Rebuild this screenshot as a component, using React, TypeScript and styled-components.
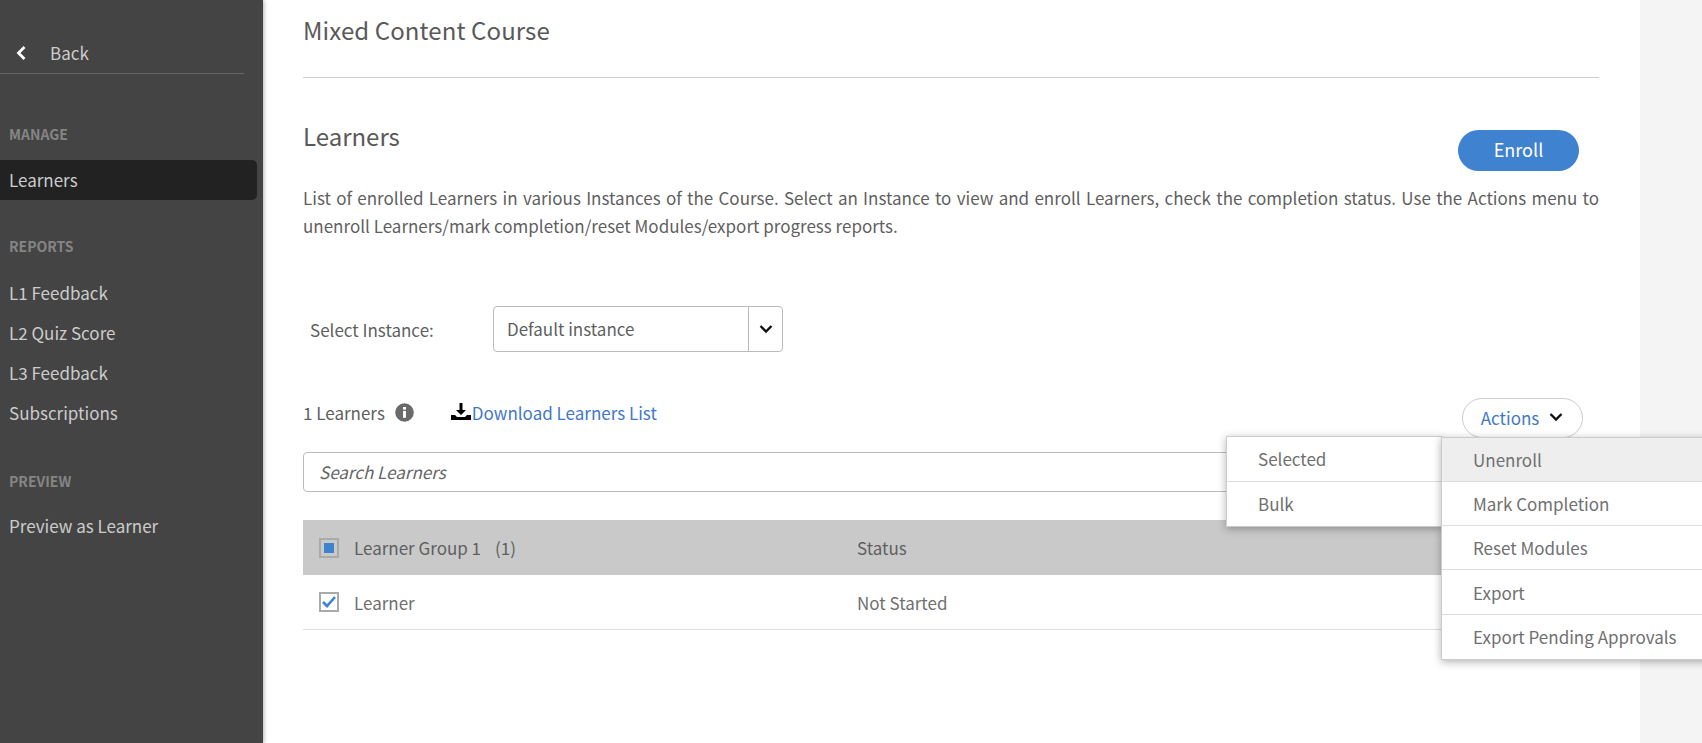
import React from "react";
import styled, { createGlobalStyle } from "styled-components";

const Global = createGlobalStyle`
  html, body { margin: 0; padding: 0; height: 100%; overflow: hidden; background: #f4f4f4; }
  body { font-family: "Noto Sans CJK SC", "Noto Sans", sans-serif; color: #666; }
  * { box-sizing: border-box; }
`;

const Page = styled.div`
  display: grid;
  grid-template-columns: 263px 1377px 1fr;
  height: 743px;
  overflow: hidden;
`;

const Sidebar = styled.aside`
  background: #444;
  box-shadow: 1px 0 4px rgba(0,0,0,.3);
  z-index: 1;
  padding-top: 36px;
`;

const BackRow = styled.div`
  width: 244px;
  height: 38px;
  border-bottom: 1px solid #666;
  display: flex;
  align-items: flex-start;
  padding: 4px 0 0 15px;
  gap: 23px;
  color: #ccc;
  font-size: 17px;
  line-height: 26px;
  svg { margin-top: 5px; }
`;

const SideHeading = styled.div<{ $mt: number }>`
  margin-top: ${(p) => p.$mt}px;
  padding-left: 9px;
  font-size: 14px;
  font-weight: 700;
  line-height: 20px;
  color: #858585;
`;

const SideItem = styled.div<{ $active?: boolean }>`
  width: 257px;
  height: 40px;
  line-height: 40px;
  padding-left: 9px;
  font-size: 17px;
  color: #ccc;
  background: ${(p) => (p.$active ? "#222" : "transparent")};
  border-radius: 0 5px 5px 0;
`;

const SideList = styled.div<{ $mt: number }>`
  margin-top: ${(p) => p.$mt}px;
`;

const Main = styled.main`
  background: #fff;
  padding: 0 41px 0 40px;
  position: relative;
`;

const Title = styled.h1`
  margin: 0;
  height: 78px;
  padding-top: 13px;
  font-size: 24px;
  line-height: 34px;
  font-weight: 400;
  letter-spacing: 0.1px;
  color: #595959;
  border-bottom: 1px solid #ccc;
`;

const SectionHead = styled.div`
  display: flex;
  justify-content: space-between;
  align-items: flex-start;
  height: 121px;
  padding-top: 43px;
`;

const Heading = styled.h2`
  margin: -1px 0 0;
  font-size: 24px;
  line-height: 32px;
  font-weight: 400;
  color: #595959;
`;

const Enroll = styled.button`
  width: 121px;
  height: 41px;
  margin: 9px 20px 0 0;
  padding: 0 0 3px;
  border: 0;
  border-radius: 21px;
  background: #3f82d0;
  color: #fff;
  font: inherit;
  font-size: 18px;
`;

const Description = styled.p`
  margin: -15px 0 0;
  font-size: 17px;
  line-height: 28px;
  color: #5f5f5f;
  text-align: justify;
`;

const InstanceRow = styled.div`
  display: flex;
  align-items: center;
  margin-top: 66px;
  height: 46px;
`;

const InstanceLabel = styled.label`
  width: 190px;
  padding-left: 7px;
  font-size: 17px;
  color: #5f5f5f;
`;

const Select = styled.div`
  width: 290px;
  height: 46px;
  display: flex;
  border: 1px solid #bbb;
  border-radius: 4px;
`;

const SelectValue = styled.div`
  flex: 1;
  padding-left: 13px;
  font-size: 17px;
  line-height: 43px;
  color: #5f5f5f;
`;

const SelectArrow = styled.div`
  width: 34px;
  border-left: 1px solid #bbb;
  display: flex;
  align-items: center;
  justify-content: center;
`;

const CountRow = styled.div`
  display: flex;
  align-items: center;
  justify-content: space-between;
  margin-top: 46px;
  height: 40px;
`;

const CountLeft = styled.div`
  display: flex;
  align-items: center;
  font-size: 17px;
  color: #5f5f5f;
  margin-top: -12px;
`;

const Info = styled.span`
  display: inline-flex;
  margin: 0 36px 0 10px;
`;

const DownloadLink = styled.a`
  display: inline-flex;
  align-items: center;
  color: #3f78c9;
  gap: 1px;
  margin-left: 1px;
`;

const ActionsButton = styled.button`
  width: 121px;
  height: 40px;
  margin-right: 16px;
  padding: 0 0 2px;
  border: 1px solid #ccc;
  border-radius: 20px;
  background: #fff;
  display: flex;
  align-items: center;
  justify-content: center;
  gap: 9px;
  font: inherit;
  font-size: 17px;
  color: #3f78c9;
`;

const Search = styled.div`
  margin-top: 14px;
  height: 40px;
  border: 1px solid #bbb;
  border-radius: 4px;
  padding-left: 15px;
  line-height: 38px;
  font-size: 17px;
  font-style: italic;
  color: #666;
`;

const TableHead = styled.div`
  margin-top: 28px;
  height: 55px;
  background: #c9c9c9;
  display: grid;
  grid-template-columns: 554px 1fr;
  align-items: center;
  font-size: 17px;
  color: #5f5f5f;
`;

const TableRow = styled.div`
  height: 55px;
  border-bottom: 1px solid #ddd;
  display: grid;
  grid-template-columns: 554px 1fr;
  align-items: center;
  font-size: 17px;
  color: #707070;
`;

const NameCell = styled.div`
  display: flex;
  align-items: center;
  padding-left: 16px;
  gap: 15px;
`;

const Check = styled.span<{ $bg: string }>`
  width: 20px;
  height: 20px;
  border: 2px solid #aaa;
  background: ${(p) => p.$bg};
  display: flex;
  align-items: center;
  justify-content: center;
`;

const Square = styled.span`
  width: 10px;
  height: 10px;
  background: #3f82d0;
`;

const Count = styled.span`
  margin-left: 14px;
`;

const Menu = styled.div<{ $left: number; $top: number; $width: number }>`
  position: absolute;
  left: ${(p) => p.$left}px;
  top: ${(p) => p.$top}px;
  width: ${(p) => p.$width}px;
  background: #fff;
  border: 1px solid #ccc;
  box-shadow: 0 2px 8px rgba(0,0,0,.3);
  font-size: 17px;
  color: #707070;
`;

const MenuItem = styled.div<{ $h: number; $hover?: boolean }>`
  height: ${(p) => p.$h}px;
  line-height: ${(p) => p.$h}px;
  padding-left: 31px;
  background: ${(p) => (p.$hover ? "#eee" : "transparent")};
  border-bottom: 1px solid #ddd;
  &:last-child { border-bottom: 0; }
`;

const SelectedItem = styled(MenuItem)`
  line-height: ${(p) => p.$h - 2}px;
`;

const Chevron = () => (
  <svg width="16" height="16" viewBox="0 0 16 16" fill="none" stroke="#111" strokeWidth="2.4">
    <path d="M2.5 5 L8 10.5 L13.5 5" />
  </svg>
);

export default function App() {
  return (
    <>
      <Global />
      <Page>
        <Sidebar>
          <BackRow>
            <svg width="12" height="16" viewBox="0 0 12 16" fill="none" stroke="#fff" strokeWidth="2.8">
              <path d="M9.5 2 L3.5 8 L9.5 14" />
            </svg>
            Back
          </BackRow>
          <SideHeading $mt={50}>MANAGE</SideHeading>
          <SideList $mt={16}>
            <SideItem $active>Learners</SideItem>
          </SideList>
          <SideHeading $mt={36}>REPORTS</SideHeading>
          <SideList $mt={17}>
            <SideItem>L1 Feedback</SideItem>
            <SideItem>L2 Quiz Score</SideItem>
            <SideItem>L3 Feedback</SideItem>
            <SideItem>Subscriptions</SideItem>
          </SideList>
          <SideHeading $mt={38}>PREVIEW</SideHeading>
          <SideList $mt={15}>
            <SideItem>Preview as Learner</SideItem>
          </SideList>
        </Sidebar>
        <Main>
          <Title>Mixed Content Course</Title>
          <SectionHead>
            <Heading>Learners</Heading>
            <Enroll>Enroll</Enroll>
          </SectionHead>
          <Description>
            List of enrolled Learners in various Instances of the Course. Select an Instance to view and enroll Learners, check the completion status. Use the Actions menu to unenroll Learners/mark completion/reset Modules/export progress reports.
          </Description>
          <InstanceRow>
            <InstanceLabel>Select Instance:</InstanceLabel>
            <Select>
              <SelectValue>Default instance</SelectValue>
              <SelectArrow><Chevron /></SelectArrow>
            </Select>
          </InstanceRow>
          <CountRow>
            <CountLeft>
              1 Learners
              <Info>
                <svg width="19" height="19" viewBox="0 0 18 18">
                  <circle cx="9" cy="9" r="8.8" fill="#6a6a6a" />
                  <rect x="7.6" y="7.5" width="2.8" height="6.5" fill="#fff" />
                  <rect x="7.6" y="3.8" width="2.8" height="2.5" fill="#fff" />
                </svg>
              </Info>
              <DownloadLink>
                <svg width="20" height="20" viewBox="0 0 20 20" fill="#000">
                  <path d="M8.5 1h3v7h3.5L10 13 5 8h3.5z" />
                  <path d="M0 13h4l2 2h8l2-2h4v5H0z" />
                </svg>
                Download Learners List
              </DownloadLink>
            </CountLeft>
            <ActionsButton>Actions <Chevron /></ActionsButton>
          </CountRow>
          <Search>Search Learners</Search>
          <TableHead>
            <NameCell>
              <Check $bg="#c9c9c9"><Square /></Check>
              <span>Learner Group 1<Count>(1)</Count></span>
            </NameCell>
            <span>Status</span>
          </TableHead>
          <TableRow>
            <NameCell>
              <Check $bg="#fff">
                <svg width="16" height="14" viewBox="0 0 16 14" fill="none" stroke="#3f82d0" strokeWidth="2.6">
                  <path d="M2 7 L6 11 L14 2" />
                </svg>
              </Check>
              <span>Learner</span>
            </NameCell>
            <span>Not Started</span>
          </TableRow>
          <Menu $left={963} $top={436} $width={216}>
            <SelectedItem $h={45}>Selected</SelectedItem>
            <MenuItem $h={44}>Bulk</MenuItem>
          </Menu>
          <Menu $left={1178} $top={437} $width={300}>
            <MenuItem $h={44} $hover>Unenroll</MenuItem>
            <MenuItem $h={44}>Mark Completion</MenuItem>
            <MenuItem $h={44}>Reset Modules</MenuItem>
            <MenuItem $h={45}>Export</MenuItem>
            <MenuItem $h={44}>Export Pending Approvals</MenuItem>
          </Menu>
        </Main>
        <div />
      </Page>
    </>
  );
}
